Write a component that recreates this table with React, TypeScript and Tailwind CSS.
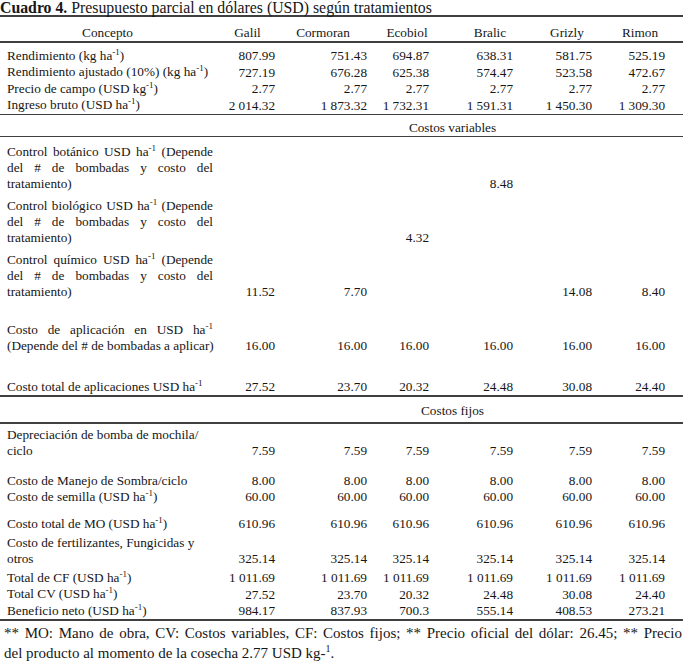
import React from 'react';

type Row = {
  label: React.ReactNode[];
  values: (string | null)[];
  mt: string;
  justify?: boolean;
  h?: string;
};

const grid = 'grid grid-cols-[215px_65px_92px_64px_82px_79px_86px]';

const headers = [
  { name: 'Galil', cls: 'text-center' },
  { name: 'Cormoran', cls: 'text-center pr-[6px]' },
  { name: 'Ecobiol', cls: 'text-center pl-[6px]' },
  { name: 'Bralic', cls: 'text-center pl-[26px]' },
  { name: 'Grizly', cls: 'text-center pl-[19px]' },
  { name: 'Rimon', cls: 'text-center' },
];

const numPad = ['pr-[5px]', 'pr-[5px]', 'pr-[7px]', 'pr-[5px]', 'pr-[5px]', 'pr-[18px]'];

const Sup = ({ children }: { children: React.ReactNode }) => (
  <sup className="text-[9px] top-[-0.55em]">{children}</sup>
);

const ha = (
  <>
    ha<Sup>-1</Sup>
  </>
);

const topRows: Row[] = [
  { label: [<>Rendimiento (kg {ha})</>], values: ['807.99', '751.43', '694.87', '638.31', '581.75', '525.19'], mt: 'mt-[5px]', h: 'h-[16.5px]' },
  { label: [<>Rendimiento ajustado (10%) (kg {ha})</>], values: ['727.19', '676.28', '625.38', '574.47', '523.58', '472.67'], mt: 'mt-0', h: 'h-[16.5px]' },
  { label: [<>Precio de campo (USD kg<Sup>-1</Sup>)</>], values: ['2.77', '2.77', '2.77', '2.77', '2.77', '2.77'], mt: 'mt-0', h: 'h-[16.5px]' },
  { label: [<>Ingreso bruto (USD {ha})</>], values: ['2 014.32', '1 873.32', '1 732.31', '1 591.31', '1 450.30', '1 309.30'], mt: 'mt-0', h: 'h-[16.5px]' },
];

const variableRows: Row[] = [
  { label: [<>Control botánico USD {ha} (Depende</>, 'del # de bombadas y costo del', 'tratamiento)'], values: [null, null, null, '8.48', null, null], mt: 'mt-[7px]', justify: true },
  { label: [<>Control biológico USD {ha} (Depende</>, 'del # de bombadas y costo del', 'tratamiento)'], values: [null, null, '4.32', null, null, null], mt: 'mt-[6px]', justify: true },
  { label: [<>Control químico USD {ha} (Depende</>, 'del # de bombadas y costo del', 'tratamiento)'], values: ['11.52', '7.70', null, null, '14.08', '8.40'], mt: 'mt-[6px]', justify: true },
  { label: [<>Costo de aplicación en USD {ha}</>, '(Depende del # de bombadas a aplicar)'], values: ['16.00', '16.00', '16.00', '16.00', '16.00', '16.00'], mt: 'mt-[22px]', justify: true },
  { label: [<>Costo total de aplicaciones USD {ha}</>], values: ['27.52', '23.70', '20.32', '24.48', '30.08', '24.40'], mt: 'mt-[25px]' },
];

const fixedRows: Row[] = [
  { label: ['Depreciación de bomba de mochila/', 'ciclo'], values: ['7.59', '7.59', '7.59', '7.59', '7.59', '7.59'], mt: 'mt-[3px]' },
  { label: ['Costo de Manejo de Sombra/ciclo'], values: ['8.00', '8.00', '8.00', '8.00', '8.00', '8.00'], mt: 'mt-[14px]' },
  { label: [<>Costo de semilla (USD {ha})</>], values: ['60.00', '60.00', '60.00', '60.00', '60.00', '60.00'], mt: 'mt-0' },
  { label: [<>Costo total de MO (USD {ha})</>], values: ['610.96', '610.96', '610.96', '610.96', '610.96', '610.96'], mt: 'mt-[11px]' },
  { label: ['Costo de fertilizantes, Fungicidas y', 'otros'], values: ['325.14', '325.14', '325.14', '325.14', '325.14', '325.14'], mt: 'mt-[3px]' },
  { label: [<>Total de CF (USD {ha})</>], values: ['1 011.69', '1 011.69', '1 011.69', '1 011.69', '1 011.69', '1 011.69'], mt: 'mt-[3px]', h: 'h-[16.5px]' },
  { label: [<>Total CV (USD {ha})</>], values: ['27.52', '23.70', '20.32', '24.48', '30.08', '24.40'], mt: 'mt-0', h: 'h-[16.5px]' },
  { label: [<>Beneficio neto (USD {ha})</>], values: ['984.17', '837.93', '700.3', '555.14', '408.53', '273.21'], mt: 'mt-0', h: 'h-[16.5px]' },
];

function Line() {
  return <div className="h-[1.5px] w-[683px] bg-[#404040]" />;
}

function TableRow({ row }: { row: Row }) {
  const last = row.label.length - 1;
  return (
    <div className={`${grid} ${row.mt} ${row.h ?? ''}`}>
      <div className="pl-[7px]">
        {row.label.map((l, i) => (
          <div
            key={i}
            className={
              row.justify && i < last ? 'text-justify [text-align-last:justify] w-[206px]' : 'whitespace-nowrap'
            }
          >
            {l}
          </div>
        ))}
      </div>
      {row.values.map((v, i) => (
        <div key={i} className={`self-end text-right whitespace-nowrap ${numPad[i]}`}>
          {v ?? ''}
        </div>
      ))}
    </div>
  );
}

function Section({ title, mt }: { title: string; mt: string }) {
  return <div className={`${mt} h-[16px] text-center pl-[220px]`}>{title}</div>;
}

export default function App() {
  return (
    <div className="w-[685px] h-[662px] bg-white text-[#161616] font-[family-name:Liberation_Serif,serif] text-[13.25px] leading-[16px] overflow-hidden">
      <div className="h-[15px] whitespace-nowrap text-[15.8px] leading-[15px]">
        <span className="font-bold">Cuadro 4.</span> Presupuesto parcial en dólares (USD) según tratamientos
      </div>
      <Line />
      <div className={`${grid} mt-[8.5px]`}>
        <div className="text-center">Concepto</div>
        {headers.map((h) => (
          <div key={h.name} className={h.cls}>
            {h.name}
          </div>
        ))}
      </div>
      <Line />
      {topRows.map((r, i) => (
        <TableRow key={i} row={r} />
      ))}
      <Line />
      <Section title="Costos variables" mt="mt-[4.5px]" />
      <Line />
      {variableRows.map((r, i) => (
        <TableRow key={i} row={r} />
      ))}
      <Line />
      <Section title="Costos fijos" mt="mt-[6.5px]" />
      <div className="mt-[3px]">
        <Line />
      </div>
      {fixedRows.map((r, i) => (
        <TableRow key={i} row={r} />
      ))}
      <Line />
      <div className="mt-[2px] pl-[4px] pr-[3px] text-[15px] leading-[20px]">
        <div className="text-justify [text-align-last:justify]">
          ** MO: Mano de obra, CV: Costos variables, CF: Costos fijos; ** Precio oficial del dólar: 26.45; ** Precio
        </div>
        <div>
          del producto al momento de la cosecha 2.77 USD kg-<sup className="text-[10px] top-[-0.6em]">1</sup>.
        </div>
      </div>
    </div>
  );
}
